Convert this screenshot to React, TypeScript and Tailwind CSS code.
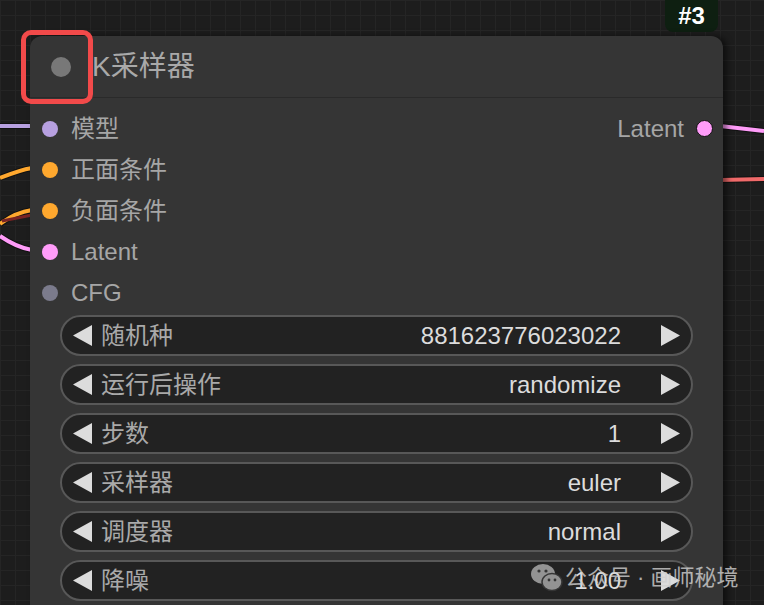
import React from 'react';

const font = { fontFamily: '"Liberation Sans", "Noto Sans CJK SC", sans-serif' };

const inputs = [
  { name: '模型', color: 'bg-[#b7a0e0]' },
  { name: '正面条件', color: 'bg-[#ffa82e]' },
  { name: '负面条件', color: 'bg-[#ffa82e]' },
  { name: 'Latent', color: 'bg-[#ff9cf9]' },
  { name: 'CFG', color: 'bg-[#7b7b8c]' },
];

const widgets = [
  { label: '随机种', value: '881623776023022' },
  { label: '运行后操作', value: 'randomize' },
  { label: '步数', value: '1' },
  { label: '采样器', value: 'euler' },
  { label: '调度器', value: 'normal' },
  { label: '降噪', value: '1.00' },
];

const Arrow: React.FC<{ dir: 'left' | 'right' }> = ({ dir }) => (
  <svg width="19" height="21" viewBox="0 0 19 21" className="shrink-0">
    {dir === 'left' ? <polygon points="19,0 19,21 0,10.5" fill="#dcdcdc" /> : <polygon points="0,0 0,21 19,10.5" fill="#dcdcdc" />}
  </svg>
);

const Wires: React.FC = () => (
  <svg className="absolute inset-0" width="764" height="605">
    {[
      { d: 'M0 126 L32 126', c: '#b7a0e0' },
      { d: 'M0 178 C10 174 20 170 32 168', c: '#ffa82e' },
      { d: 'M0 224 C8 218 18 212 32 210', c: '#ffa82e' },
      { d: 'M0 236 C10 243 20 248 32 250', c: '#ff9cf9' },
      { d: 'M720 126 L764 131', c: '#ff9cf9' },
      { d: 'M720 180 L764 179', c: '#f06a6a' },
    ].map((w, i) => (
      <g key={i}>
        <path d={w.d} stroke="#111" strokeWidth="6" fill="none" />
        <path d={w.d} stroke={w.c} strokeWidth="4" fill="none" />
      </g>
    ))}
    <path d="M2 221 L32 215" stroke="#7a2424" strokeWidth="3" fill="none" />
  </svg>
);

const App: React.FC = () => {
  return (
    <div
      className="relative w-[764px] h-[605px] overflow-hidden bg-[#1d1d1d] bg-[linear-gradient(to_right,#252525_1px,transparent_1px),linear-gradient(to_bottom,#252525_1px,transparent_1px)] bg-[size:15px_15px]"
      style={font}
    >
      <Wires />

      {/* node id badge */}
      <div className="absolute left-[665px] top-0 w-[53px] h-[32px] rounded-b-[8px] bg-[#0e1f11] flex items-center justify-center text-white text-[24px] font-bold">
        #3
      </div>

      {/* node */}
      <div className="absolute left-[30px] top-[36px] w-[693px] h-[600px] rounded-t-[12px] bg-[#353535] shadow-[4px_0_6px_rgba(0,0,0,0.5)]">
        <div className="h-[62px] flex items-center border-b border-[#2a2a2a]">
          <div className="ml-[21px] w-[20px] h-[20px] rounded-full bg-[#787878]" />
          <span className="ml-[21px] text-[28px] text-[#a9a9a9]">K采样器</span>
        </div>

        <div className="pt-[10px]">
          {inputs.map((inp, i) => (
            <div key={inp.name} className="h-[41px] flex items-center pl-[12px] pr-[10px]">
              <div className={`w-[16px] h-[16px] rounded-full ${inp.color}`} />
              <span className="ml-[13px] text-[24px] text-[#a6a6a6]">{inp.name}</span>
              {i === 0 && (
                <div className="ml-auto flex items-center">
                  <span className="text-[24px] text-[#a6a6a6]">Latent</span>
                  <div className="ml-[12px] w-[17px] h-[17px] rounded-full bg-[#ff9cf9] border-[1.5px] border-[#111]" />
                </div>
              )}
            </div>
          ))}
        </div>

        <div className="mx-[30px] mt-[2px] flex flex-col gap-[8px]">
          {widgets.map((w) => (
            <div
              key={w.label}
              className="h-[41px] rounded-full border-2 border-[#585858] bg-[#222222] flex items-center pl-[11px] pr-[11px]"
            >
              <Arrow dir="left" />
              <span className="ml-[9px] text-[24px] text-[#a9a9a9]">{w.label}</span>
              <span className="ml-auto text-[24px] text-[#dcdcdc]">{w.value}</span>
              <div className="ml-[40px]">
                <Arrow dir="right" />
              </div>
            </div>
          ))}
        </div>
      </div>

      {/* highlight box */}
      <div className="absolute left-[21px] top-[30px] w-[72px] h-[74px] rounded-[10px] border-[5px] border-[#f24a4a]" />

      {/* watermark */}
      <div className="absolute left-[530px] top-[561px] flex items-center opacity-80">
        <svg width="34" height="30" viewBox="0 0 34 30">
          <ellipse cx="13" cy="11" rx="12" ry="10" fill="#b0b0b0" />
          <ellipse cx="22" cy="19" rx="10" ry="8.5" fill="#b0b0b0" stroke="#3a3a3a" strokeWidth="1.5" />
          <circle cx="9" cy="8" r="1.6" fill="#3a3a3a" />
          <circle cx="16" cy="8" r="1.6" fill="#3a3a3a" />
          <circle cx="19" cy="17" r="1.4" fill="#3a3a3a" />
          <circle cx="25" cy="17" r="1.4" fill="#3a3a3a" />
        </svg>
        <span className="ml-[1px] text-[22px] text-[#d0d0d0]">公众号 · 画师秘境</span>
      </div>
    </div>
  );
};

export default App;
